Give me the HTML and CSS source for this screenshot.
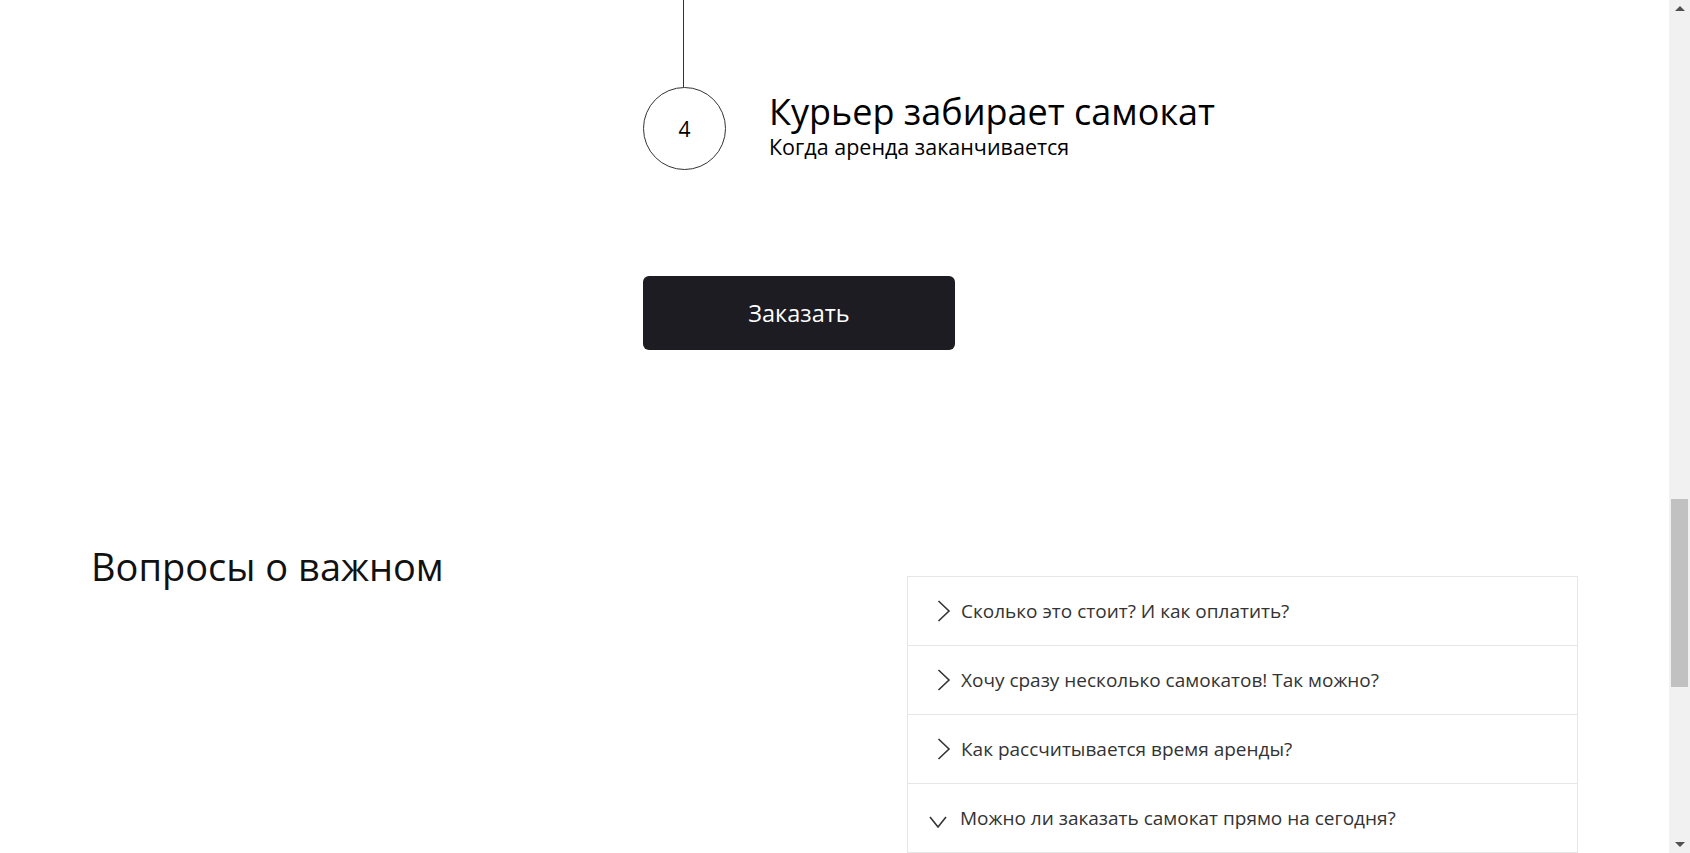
FILE: index.html
```html
<!DOCTYPE html>
<html lang="ru">
<head>
<meta charset="utf-8">
<title>Самокат</title>
<link rel="stylesheet" href="styles.css">
</head>
<body>
<div class="page">
  <main class="main">
    <section class="steps">
      <div class="step-line"></div>
      <div class="step">
        <div class="step-num">4</div>
        <div class="step-text">
          <div class="step-title">Курьер забирает самокат</div>
          <div class="step-sub">Когда аренда заканчивается</div>
        </div>
      </div>
      <button class="order-btn">Заказать</button>
    </section>
    <section class="faq">
      <h2 class="faq-title">Вопросы о важном</h2>
      <div class="accordion">
        <div class="acc-item">
          <svg class="chev" width="14" height="22" viewBox="0 0 14 22"><path d="M1.5 1 L12 11 L1.5 21" fill="none" stroke="#333" stroke-width="1.6"/></svg>
          <span class="acc-text">Сколько это стоит? И как оплатить?</span>
        </div>
        <div class="acc-item">
          <svg class="chev" width="14" height="22" viewBox="0 0 14 22"><path d="M1.5 1 L12 11 L1.5 21" fill="none" stroke="#333" stroke-width="1.6"/></svg>
          <span class="acc-text">Хочу сразу несколько самокатов! Так можно?</span>
        </div>
        <div class="acc-item">
          <svg class="chev" width="14" height="22" viewBox="0 0 14 22"><path d="M1.5 1 L12 11 L1.5 21" fill="none" stroke="#333" stroke-width="1.6"/></svg>
          <span class="acc-text">Как рассчитывается время аренды?</span>
        </div>
        <div class="acc-item open">
          <svg class="chev-down" width="18" height="14" viewBox="0 0 18 14"><path d="M1 2 L9 12 L17 2" fill="none" stroke="#333" stroke-width="1.6"/></svg>
          <span class="acc-text">Можно ли заказать самокат прямо на сегодня?</span>
        </div>
      </div>
    </section>
  </main>
  <div class="scrollbar">
    <div class="sb-arrow up"></div>
    <div class="sb-track">
      <div class="sb-thumb"></div>
    </div>
    <div class="sb-arrow down"></div>
  </div>
</div>
</body>
</html>
```

FILE: styles.css
```css
html, body {
  margin: 0;
  padding: 0;
  height: 853px;
  overflow: hidden;
  background: #fff;
}
body {
  font-family: "Open Sans", "Noto Sans", sans-serif;
  color: #000;
}
.page {
  display: flex;
  height: 853px;
}
.main {
  flex: 1;
  min-width: 0;
}
.steps {
  padding-left: 643px;
  display: flex;
  flex-direction: column;
  align-items: flex-start;
}
.step-line {
  width: 1px;
  height: 87px;
  background: #333;
  margin-left: 40px;
}
.step {
  display: flex;
  align-items: center;
  gap: 43px;
}
.step-num {
  width: 81px;
  height: 81px;
  border: 1px solid #333;
  border-radius: 50%;
  display: flex;
  align-items: center;
  justify-content: center;
  font-size: 21px;
  color: #000;
  flex-shrink: 0;
}
.step-text {
  display: flex;
  flex-direction: column;
  margin-top: -5px;
}
.step-title {
  font-size: 36px;
  line-height: 42px;
}
.step-sub {
  font-size: 21.5px;
  line-height: 28px;
  color: #000;
}
.order-btn {
  margin-top: 106px;
  width: 312px;
  height: 74px;
  background: #1c1c22;
  color: #fff;
  border: 0;
  border-radius: 6px;
  font-family: inherit;
  font-size: 23.5px;
  font-weight: 500;
  cursor: pointer;
}
.faq {
  display: flex;
  justify-content: space-between;
  align-items: flex-start;
  padding: 0 91px 0 91px;
  margin-top: 226px;
}
.faq-title {
  margin: -34px 0 0 0;
  font-size: 38px;
  font-weight: 400;
  line-height: 48px;
  color: #111;
}
.accordion {
  width: 669px;
  border: 1px solid #e6e6e6;
  border-bottom: 0;
}
.acc-item {
  height: 68px;
  border-bottom: 1px solid #e6e6e6;
  display: flex;
  align-items: center;
  padding-left: 29px;
  gap: 10px;
  color: #333;
}
.acc-item .chev {
  flex-shrink: 0;
}
.acc-item.open {
  padding-left: 21px;
}
.acc-item.open .chev-down {
  flex-shrink: 0;
  margin-top: 8px;
  margin-right: 3px;
}
.acc-text {
  font-size: 19px;
  color: #333;
}
.scrollbar {
  width: 21px;
  background: #f1f1f1;
  display: flex;
  flex-direction: column;
  align-items: center;
}
.sb-arrow {
  width: 0;
  height: 0;
  border-left: 5px solid transparent;
  border-right: 5px solid transparent;
}
.sb-arrow.up {
  border-bottom: 5px solid #505050;
  margin: 6px 0;
}
.sb-arrow.down {
  border-top: 5px solid #505050;
  margin: 6px 0;
}
.sb-track {
  flex: 1;
  width: 100%;
  display: flex;
  justify-content: center;
  padding-top: 482px;
  box-sizing: border-box;
}
.sb-thumb {
  width: 17px;
  height: 188px;
  background: #c1c1c1;
}
```
